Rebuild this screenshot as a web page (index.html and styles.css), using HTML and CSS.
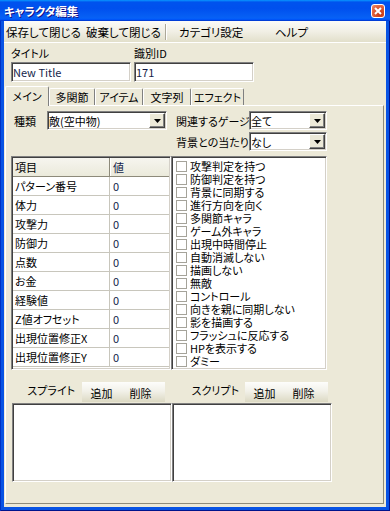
FILE: index.html
```html
<!DOCTYPE html>
<html>
<head>
	<title>キャラクタ編集</title>
	<link rel="stylesheet" href="styles.css">
</head>
<body>
	<div class="window">
		<div class="titlebar">
			<span class="title">キャラクタ編集</span>
			<span class="close"><svg width="8" height="8" viewBox="0 0 8 8"><path d="M1 1L7 7M7 1L1 7" stroke="#fff" stroke-width="2"/></svg></span>
		</div>
		<div class="client">
			<div class="menubar">
				<span class="menu-item save">保存して閉じる</span>
				<span class="menu-item discard">破棄して閉じる</span>
				<span class="menu-sep"></span>
				<span class="menu-item category">カテゴリ設定</span>
				<span class="menu-item help">ヘルプ</span>
			</div>
			<div class="fields">
				<div class="field">
					<label>タイトル</label>
					<input class="edit" type="text" value="New Title">
				</div>
				<div class="field">
					<label>識別ID</label>
					<input class="edit" type="text" value="171">
				</div>
			</div>
			<div class="tabs">
				<span class="tab active tab-main">メイン</span>
				<span class="tab tab-joint">多関節</span>
				<span class="tab tab-item">アイテム</span>
				<span class="tab tab-text">文字列</span>
				<span class="tab tab-effect">エフェクト</span>
			</div>
			<div class="tab-panel">
				<div class="combos">
					<div class="combo-group">
						<span class="combo-label kind">種類</span>
						<div class="combo wide">
							<span class="combo-text">敵(空中物)</span>
							<span class="drop"><svg width="7" height="4" viewBox="0 0 7 4"><path d="M0 0H7L3.5 4Z" fill="#000"/></svg></span>
						</div>
					</div>
					<div class="combo-stack">
						<div class="combo-group">
							<span class="combo-label side">関連するゲージ</span>
							<div class="combo narrow">
								<span class="combo-text">全て</span>
								<span class="drop"><svg width="7" height="4" viewBox="0 0 7 4"><path d="M0 0H7L3.5 4Z" fill="#000"/></svg></span>
							</div>
						</div>
						<div class="combo-group">
							<span class="combo-label side">背景との当たり</span>
							<div class="combo narrow">
								<span class="combo-text">なし</span>
								<span class="drop"><svg width="7" height="4" viewBox="0 0 7 4"><path d="M0 0H7L3.5 4Z" fill="#000"/></svg></span>
							</div>
						</div>
					</div>
				</div>

				<div class="lists">
					<div class="grid sunken">
						<div class="grid-row head">
							<span class="cell name">項目</span>
							<span class="cell value">値</span>
						</div>
						<div class="grid-row"><span class="cell name">パターン番号</span><span class="cell value">0</span></div>
						<div class="grid-row"><span class="cell name">体力</span><span class="cell value">0</span></div>
						<div class="grid-row"><span class="cell name">攻撃力</span><span class="cell value">0</span></div>
						<div class="grid-row"><span class="cell name">防御力</span><span class="cell value">0</span></div>
						<div class="grid-row"><span class="cell name">点数</span><span class="cell value">0</span></div>
						<div class="grid-row"><span class="cell name">お金</span><span class="cell value">0</span></div>
						<div class="grid-row"><span class="cell name">経験値</span><span class="cell value">0</span></div>
						<div class="grid-row"><span class="cell name">Z値オフセット</span><span class="cell value">0</span></div>
						<div class="grid-row"><span class="cell name">出現位置修正X</span><span class="cell value">0</span></div>
						<div class="grid-row"><span class="cell name">出現位置修正Y</span><span class="cell value">0</span></div>
					</div>

					<div class="checklist sunken">
						<div class="check"><span class="box"></span>攻撃判定を持つ</div>
						<div class="check"><span class="box"></span>防御判定を持つ</div>
						<div class="check"><span class="box"></span>背景に同期する</div>
						<div class="check"><span class="box"></span>進行方向を向く</div>
						<div class="check"><span class="box"></span>多関節キャラ</div>
						<div class="check"><span class="box"></span>ゲーム外キャラ</div>
						<div class="check"><span class="box"></span>出現中時間停止</div>
						<div class="check"><span class="box"></span>自動消滅しない</div>
						<div class="check"><span class="box"></span>描画しない</div>
						<div class="check"><span class="box"></span>無敵</div>
						<div class="check"><span class="box"></span>コントロール</div>
						<div class="check"><span class="box"></span>向きを親に同期しない</div>
						<div class="check"><span class="box"></span>影を描画する</div>
						<div class="check"><span class="box"></span>フラッシュに反応する</div>
						<div class="check"><span class="box"></span>HPを表示する</div>
						<div class="check"><span class="box"></span>ダミー</div>
					</div>
				</div>

				<div class="resources">
					<div class="resource sprite">
						<div class="resource-head">
							<span class="resource-label">スプライト</span>
							<div class="toolbar">
								<span class="tool-btn">追加</span>
								<span class="tool-btn">削除</span>
							</div>
						</div>
						<div class="listbox sunken"></div>
					</div>
					<div class="resource script">
						<div class="resource-head">
							<span class="resource-label">スクリプト</span>
							<div class="toolbar">
								<span class="tool-btn">追加</span>
								<span class="tool-btn">削除</span>
							</div>
						</div>
						<div class="listbox sunken"></div>
					</div>
				</div>
			</div>
		</div>
	</div>
</body>
</html>
```

FILE: styles.css
```css
* {
	margin: 0;
	padding: 0;
	box-sizing: border-box;
}

body {
	font-family: "Noto Sans CJK JP", "Noto Sans", sans-serif;
	font-size: 11px;
	font-feature-settings: "palt";
	color: #000;
	background: #fff;
}

.window {
	width: 390px;
	height: 511px;
	display: flex;
	flex-direction: column;
	background: #0853e4;
	box-shadow: inset 1px 0 #0031c4, inset -1px 0 #00138c, inset 0 -1px #00138c;
}

/* title bar */
.titlebar {
	height: 21px;
	display: flex;
	align-items: center;
	justify-content: space-between;
	padding: 0 5px 0 4px;
	background: linear-gradient(180deg, #0997ff, #0053ee 10%, #0050ee 40%, #0761f5 85%, #005bff 92%, #003dd7 96%, #003dd7);
}

.title {
	color: #fff;
	font-weight: bold;
	font-size: 11.5px;
	line-height: 14px;
	text-shadow: 1px 1px #0f1089;
}

.close {
	width: 14px;
	height: 14px;
	display: flex;
	align-items: center;
	justify-content: center;
	border: 1px solid #fff;
	border-radius: 3px;
	background: radial-gradient(circle at 70% 75%, #c23512, #e0603a 60%, #ef8f6f);
}

/* client area */
.client {
	flex: 1;
	margin: 0 4px 4px;
	display: flex;
	flex-direction: column;
	background: #ece9d8;
}

.menubar {
	height: 22px;
	display: flex;
	align-items: center;
	padding-left: 2px;
	background: linear-gradient(180deg, #fbfbf8, #f1efe5 50%, #e2dfcb);
	border-bottom: 1px solid #fff;
	font-size: 11.5px;
	line-height: 14px;
}

.menu-item {
	white-space: nowrap;
}

.menu-item.save { width: 80px; }
.menu-item.discard { width: 79px; }
.menu-item.category { width: 96px; margin-left: 12px; }

.menu-sep {
	width: 2px;
	height: 16px;
	border-left: 1px solid #aca899;
	border-right: 1px solid #fff;
}

.fields {
	display: flex;
	gap: 3px;
	padding: 3px 0 0 7px;
}

.field label {
	display: block;
	height: 16px;
	line-height: 14px;
}

.edit {
	display: block;
	width: 120px;
	height: 20px;
	padding: 0 1px;
	font: inherit;
	font-feature-settings: "palt";
	color: #141e4a;
	background: #fff;
	border: 1px solid;
	border-color: #808080 #fff #fff #808080;
	box-shadow: inset 1px 1px #404040, inset -1px -1px #d4d0c8;
	outline: none;
}

/* tabs */
.tabs {
	height: 19px;
	margin: 4px 0 0 1px;
	display: flex;
	align-items: flex-end;
}

.tab {
	height: 17px;
	line-height: 16px;
	text-align: center;
	white-space: nowrap;
	border-top: 1px solid #fff;
	border-left: 1px solid #fff;
	border-right: 1px solid #808080;
	border-radius: 2px 2px 0 0;
	background: #ece9d8;
}

.tab.active {
	position: relative;
	z-index: 1;
	height: 20px;
	margin-bottom: -1px;
	line-height: 19px;
}

.tab-main { width: 44px; }
.tab-joint { width: 46px; }
.tab-item { width: 48px; }
.tab-text { width: 48px; }
.tab-effect { width: 53px; }

.tab-panel {
	flex: 1;
	margin: 0 2px 3px 1px;
	padding-top: 5px;
	border: 1px solid;
	border-color: #fff #8d8a7a #8d8a7a #fff;
}

/* combos */
.combos {
	display: flex;
	align-items: flex-start;
}

.combo-group {
	display: flex;
	align-items: center;
}

.combos > .combo-group {
	padding-left: 8px;
}

.combo-stack {
	display: flex;
	flex-direction: column;
	gap: 2px;
	margin-left: 9px;
}

.combo-label {
	white-space: nowrap;
	line-height: 14px;
}

.combo-label.kind { width: 33px; }
.combo-label.side { width: 73px; }

.combo {
	height: 19px;
	display: flex;
	align-items: center;
	padding: 1px;
	background: #fff;
	border: 1px solid;
	border-color: #808080 #fff #fff #808080;
	box-shadow: inset 1px 1px #404040, inset -1px -1px #d4d0c8;
}

.combo.wide { width: 120px; }
.combo.narrow { width: 78px; }

.combo-text {
	flex: 1;
	line-height: 14px;
	white-space: nowrap;
	overflow: hidden;
}

.drop {
	width: 16px;
	height: 15px;
	display: flex;
	align-items: center;
	justify-content: center;
	background: #ece9d8;
	border: 1px solid;
	border-color: #fff #404040 #404040 #fff;
	box-shadow: inset -1px -1px #808080;
}

/* shared sunken frame */
.sunken {
	background: #fff;
	border: 1px solid;
	border-color: #808080 #fff #fff #808080;
	box-shadow: inset 1px 1px #404040, inset -1px -1px #d4d0c8;
	padding: 1px;
}

/* property grid and flags */
.lists {
	display: flex;
	margin: 5px 0 0 5px;
	height: 214px;
}

.grid {
	width: 160px;
	height: 100%;
}

.grid-row {
	display: flex;
	height: 19px;
	border-bottom: 1px solid #c8c6bc;
}

.cell {
	line-height: 18px;
	white-space: nowrap;
}

.cell.name {
	width: 97px;
	padding-left: 2px;
	border-right: 1px solid #c8c6bc;
}

.cell.value {
	flex: 1;
	padding-left: 3px;
	color: #141e4a;
}

.grid-row.head {
	background: linear-gradient(180deg, #f6f5ef, #ebeadb);
	border-bottom: 1px solid #8d8a7a;
}

.grid-row.head .cell.name {
	border-right: 1px solid #8d8a7a;
	box-shadow: 1px 0 #fff;
}

.checklist {
	width: 156px;
	height: 100%;
	padding: 3px 0 0 4px;
}

.check {
	display: flex;
	align-items: center;
	height: 13px;
	line-height: 13px;
	white-space: nowrap;
}

.box {
	width: 11px;
	height: 11px;
	margin-right: 3px;
	border: 1px solid #a5a39a;
	background: #fff;
}

/* sprite / script */
.resources {
	display: flex;
	margin: 12px 0 0 6px;
}

.resource {
	width: 160px;
	display: flex;
	flex-direction: column;
}

.resource-head {
	height: 20px;
	margin-bottom: 1px;
	display: flex;
	justify-content: flex-end;
}

.resource-label {
	line-height: 16px;
	margin-right: 7px;
	white-space: nowrap;
}

.sprite .resource-head { padding-right: 7px; }
.script .resource-head { padding-right: 4px; }
.script .resource-label { margin-right: 6px; }

.toolbar {
	width: 83px;
	display: flex;
	background: linear-gradient(180deg, #fdfdfb, #f2f1e9 45%, #dcd9c3);
}

.tool-btn {
	width: 39px;
	padding-top: 2px;
	line-height: 18px;
	text-align: center;
}

.listbox {
	height: 79px;
}
```
